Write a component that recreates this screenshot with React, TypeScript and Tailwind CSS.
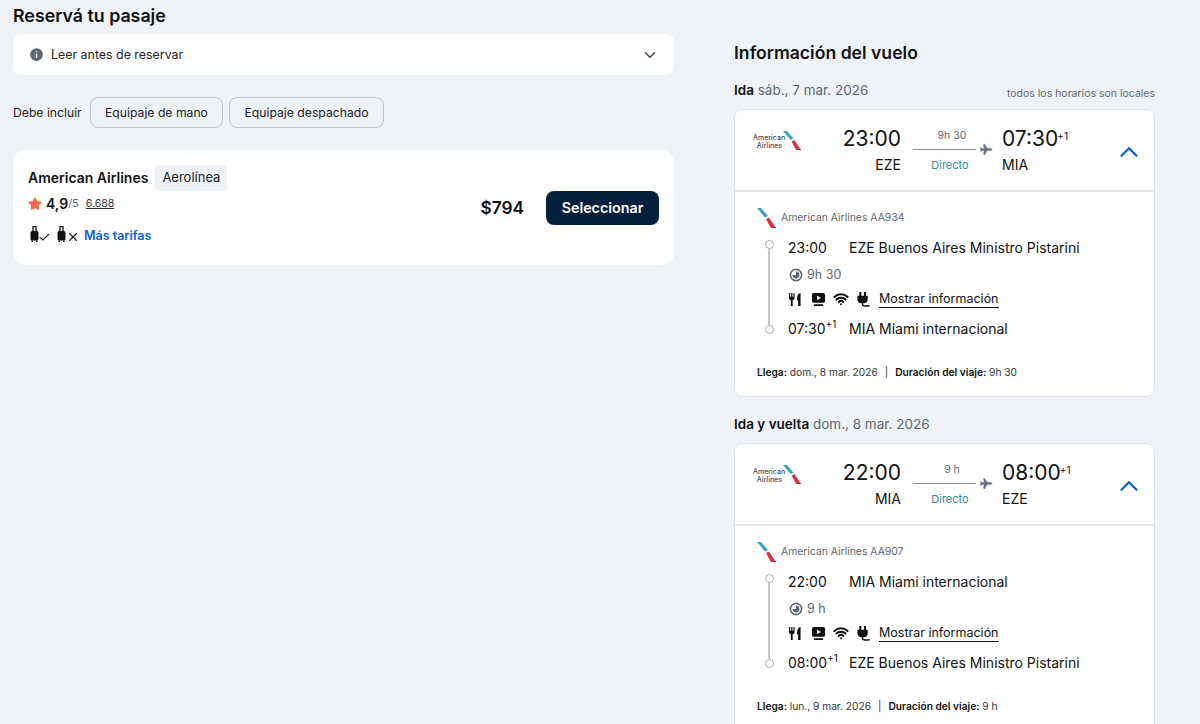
import React from 'react';
import { ChevronDown, ChevronUp, Plane, Info, Star, Check, X, Wifi } from 'lucide-react';

function AALogo({ className }: { className?: string }) {
  return (
    <svg viewBox="0 0 20 20" className={className}>
      <path d="M0 0 L4 0 L11 8 L8 9.5 Z" fill="#3f9fc0" />
      <path d="M9 11 L12 9.5 L18 18.5 L13.5 19.5 Z" fill="#d8343f" />
      <path d="M13.5 19.5 L18 18.5 L19.5 20 L14 20 Z" fill="#9a2a33" />
    </svg>
  );
}

function Luggage({ children }: { children: React.ReactNode }) {
  return (
    <span className="flex items-end mb-[6px]">
      <svg viewBox="0 0 9 16" className="w-[9px] h-[16px]">
        <path d="M3 6 V0.7 H6 V6" fill="none" stroke="#111" strokeWidth="1.3" />
        <rect x="0.5" y="5" width="8" height="9.5" rx="1.6" fill="#111" />
        <rect x="1.5" y="14.5" width="1.5" height="1.5" fill="#111" />
        <rect x="6" y="14.5" width="1.5" height="1.5" fill="#111" />
      </svg>
      {children}
    </span>
  );
}

function MealIcon() {
  return (
    <svg viewBox="0 0 16 16" className="w-[15px] h-[15px]">
      <path d="M1 1 V6 C1 8 2.5 8.5 3 8.5 V15 H5 V8.5 C6 8.5 7 8 7 6 V1 H5.8 V5 H4.7 V1 H3.4 V5 H2.3 V1 Z" fill="#111" />
      <path d="M10.8 15 H13.4 V1 C11 1 9.6 4 9.6 9 H10.8 Z" fill="#111" />
    </svg>
  );
}

function TvIcon() {
  return (
    <svg viewBox="0 0 16 16" className="w-[15px] h-[15px]">
      <rect x="1" y="1" width="14" height="10.5" rx="2" fill="#111" />
      <path d="M6.5 3.8 L10.5 6.3 L6.5 8.8 Z" fill="#fff" />
      <rect x="3" y="13" width="10" height="2" rx="0.6" fill="#111" />
    </svg>
  );
}

function PlugIcon() {
  return (
    <svg viewBox="0 0 16 16" className="w-[15px] h-[15px]">
      <rect x="3.5" y="0" width="2.2" height="4.5" fill="#111" />
      <rect x="8.5" y="0" width="2.2" height="4.5" fill="#111" />
      <path d="M1.5 4 H12.5 V7.5 C12.5 10.5 10.5 12 8.5 12 H5.5 C3.5 12 1.5 10.5 1.5 7.5 Z" fill="#111" />
      <path d="M7 12 V13 C7 15 11 15.6 14.5 14.4" fill="none" stroke="#111" strokeWidth="1.6" />
    </svg>
  );
}

function ClockIcon() {
  return (
    <svg viewBox="0 0 14 14" className="w-[14px] h-[14px]">
      <circle cx="7" cy="7" r="5.6" fill="none" stroke="#5f6672" strokeWidth="1.6" />
      <path d="M7 3.6 A3.4 3.4 0 1 1 3.6 7 L7 7 Z" fill="#5f6672" />
    </svg>
  );
}

type Flight = {
  label: string;
  date: string;
  note?: boolean;
  dep: string;
  arr: string;
  from: string;
  to: string;
  dur: string;
  code: string;
  fromName: string;
  toName: string;
  arrDate: string;
};

function FlightCard({ f }: { f: Flight }) {
  return (
    <section>
      <div className="flex items-end justify-between h-[20px]">
        <p className="text-[13.5px] leading-[20px] text-[#5f6672]">
          <span className="font-semibold text-[#111]">{f.label}</span> {f.date}
        </p>
        {f.note && <span className="text-[10.5px] leading-[12px] text-[#5f6672]">todos los horarios son locales</span>}
      </div>
      <div className="mt-[9px] bg-white rounded-lg border border-[#dfe2e7]">
        <div className="h-[82px] flex pl-[18px] border-b-2 border-[#e3e5e9]">
          <div className="w-[50px] pt-[21px] flex items-start">
            <span className="text-[7px] leading-[8px] text-right text-[#444c59] w-[29px] font-medium pt-[3px]">
              American
              <br />
              Airlines
            </span>
            <AALogo className="w-[19px] h-[19px] ml-[1px]" />
          </div>
          <div className="w-[98px] pt-[14px] text-right">
            <div className="text-[21px] leading-[30px] text-[#111]">{f.dep}</div>
            <div className="text-[14px] leading-[20px] text-[#111] mt-[1px]">{f.from}</div>
          </div>
          <div className="ml-[12px] w-[79px] pt-[19px] flex flex-col">
            <span className="w-[78px] text-center text-[10.5px] leading-[14px] text-[#5f6672]">{f.dur}</span>
            <div className="flex items-center h-[14px] -mt-[1px]">
              <div className="w-[65px] h-px bg-[#8a909a]" />
              <Plane className="w-[13px] h-[13px] ml-[3px] rotate-45 text-[#6b7280] fill-[#6b7280]" strokeWidth={1} />
            </div>
            <span className="w-[74px] text-center text-[11px] leading-[16px] text-[#2a8a93] mt-[1px]">Directo</span>
          </div>
          <div className="ml-[10px] w-[104px] pt-[14px]">
            <div className="text-[21px] leading-[30px] text-[#111]">
              {f.arr}
              <sup className="text-[10px] top-[-6px] -ml-[1px]">+1</sup>
            </div>
            <div className="text-[14px] leading-[20px] text-[#111] mt-[1px]">{f.to}</div>
          </div>
          <div className="ml-[8px] pt-[27px]">
            <ChevronUp className="w-[30px] h-[30px] text-[#0b5ed7]" strokeWidth={1.8} />
          </div>
        </div>
        <div className="pl-[22px] pt-[16px] pb-[16px]">
          <div className="flex items-center h-[20px] text-[10.4px] text-[#5f6672]">
            <AALogo className="w-[20px] h-[20px] mr-[4px]" />
            American Airlines {f.code}
          </div>
          <div className="flex mt-[2px]">
            <div className="w-[28px] flex flex-col items-center pt-[10px] pr-[2px] pb-[5px] -ml-[1px]">
              <span className="w-[9px] h-[9px] rounded-full border border-[#a6abb3]" />
              <span className="flex-1 w-[2px] bg-[#c3c7cd]" />
              <span className="w-[9px] h-[9px] rounded-full border border-[#a6abb3]" />
            </div>
            <div className="flex-1 text-[14px] text-[#111] pl-[4px]">
              <div className="flex h-[31px] pt-[8px] leading-[20px]">
                <span className="w-[61px]">{f.dep}</span>
                <span>
                  {f.from} {f.fromName}
                </span>
              </div>
              <div className="flex items-center gap-[4px] mt-[4px] h-[20px] text-[12.5px] text-[#5f6672] pl-[1px]">
                <ClockIcon />
                {f.dur}
              </div>
              <div className="flex items-center mt-[4px] h-[20px]">
                <MealIcon />
                <span className="ml-[8px]">
                  <TvIcon />
                </span>
                <Wifi className="ml-[7px] w-[16px] h-[16px] text-[#111]" strokeWidth={3} />
                <span className="ml-[7px]">
                  <PlugIcon />
                </span>
                <span className="ml-[8px] text-[12.5px] leading-[16px] border-b border-[#111]">Mostrar información</span>
              </div>
              <div className="flex h-[20px] mt-[10px] leading-[20px]">
                <span className="w-[61px]">
                  {f.arr}
                  <sup className="text-[10px] top-[-6px]">+1</sup>
                </span>
                <span>
                  {f.to} {f.toName}
                </span>
              </div>
            </div>
          </div>
          <p className="mt-[25px] text-[10.2px] leading-[16px] text-[#333]">
            <span className="font-semibold text-[#111]">Llega:</span> {f.arrDate}
            <span className="mx-[7px]">|</span>
            <span className="font-semibold text-[#111]">Duración del viaje:</span> {f.dur}
          </p>
        </div>
      </div>
    </section>
  );
}

const flights: Flight[] = [
  {
    label: 'Ida',
    date: 'sáb., 7 mar. 2026',
    note: true,
    dep: '23:00',
    arr: '07:30',
    from: 'EZE',
    to: 'MIA',
    dur: '9h 30',
    code: 'AA934',
    fromName: 'Buenos Aires Ministro Pistarini',
    toName: 'Miami internacional',
    arrDate: 'dom., 8 mar. 2026',
  },
  {
    label: 'Ida y vuelta',
    date: 'dom., 8 mar. 2026',
    dep: '22:00',
    arr: '08:00',
    from: 'MIA',
    to: 'EZE',
    dur: '9 h',
    code: 'AA907',
    fromName: 'Miami internacional',
    toName: 'Buenos Aires Ministro Pistarini',
    arrDate: 'lun., 9 mar. 2026',
  },
];

export default function App() {
  return (
    <div className="h-[724px] overflow-hidden bg-[#eff3f8] font-['Inter',sans-serif] flex pl-[13px]">
      <main className="w-[661px] pt-[6px]">
        <h1 className="text-[17.8px] leading-[20px] font-semibold text-[#111]">Reservá tu pasaje</h1>
        <div className="mt-[8px] h-[41px] bg-white rounded-lg flex items-center pl-[15px] pr-[16px] text-[12.4px] text-[#222]">
          <Info className="w-[17px] h-[17px] text-white fill-[#5f6672]" strokeWidth={2} />
          <span className="ml-[6px] flex-1 pt-[1px]">Leer antes de reservar</span>
          <ChevronDown className="w-[18px] h-[18px] mr-[-1px] text-[#444]" />
        </div>
        <div className="mt-[22px] flex items-center text-[12.2px] text-[#222]">
          <span className="w-[77px] pt-[2px]">Debe incluir</span>
          <button className="h-[31px] w-[133px] pt-[2px] rounded-lg border border-[#c3c7cd]">Equipaje de mano</button>
          <button className="ml-[6px] h-[31px] w-[155px] pt-[2px] rounded-lg border border-[#c3c7cd]">Equipaje despachado</button>
        </div>
        <div className="mt-[22px] h-[115px] bg-white rounded-xl flex items-center justify-between pl-[15px] pr-[15px]">
          <div className="mb-[4px]">
            <div className="flex items-center gap-[7px]">
              <span className="text-[14px] font-semibold text-[#111]">American Airlines</span>
              <span className="h-[26px] flex items-center px-[7px] rounded bg-[#eff3f8] text-[13px] text-[#222]">Aerolínea</span>
            </div>
            <div className="flex items-center mt-[3px] h-[20px]">
              <Star className="w-[14px] h-[14px] text-[#f5694a] fill-[#f5694a]" />
              <span className="ml-[4px] text-[14px] font-semibold text-[#111]">4,9</span>
              <span className="text-[11px] text-[#5f6672]">/5</span>
              <span className="ml-[7px] text-[10.5px] text-[#333] underline">6.688</span>
            </div>
            <div className="flex items-center mt-[13px] h-[20px] pl-[2px]">
              <Luggage>
                <Check className="w-[13px] h-[13px] -mx-[1px] -mb-[2px] text-[#222]" />
              </Luggage>
              <span className="ml-[7px]">
                <Luggage>
                  <X className="w-[14px] h-[14px] -mb-[2px] -mr-[2px] text-[#222]" />
                </Luggage>
              </span>
              <span className="ml-[6px] text-[12.5px] font-semibold text-[#0b62d6]">Más tarifas</span>
            </div>
          </div>
          <div className="flex items-center">
            <span className="text-[17.3px] font-semibold text-[#111]">$794</span>
            <button className="ml-[22px] w-[113px] h-[34px] rounded-lg bg-[#05203c] text-white text-[14.3px] font-semibold">
              Seleccionar
            </button>
          </div>
        </div>
      </main>
      <aside className="ml-[60px] w-[421px] pt-[43px]">
        <h2 className="text-[17.6px] leading-[20px] font-semibold text-[#111]">Información del vuelo</h2>
        <div className="mt-[17px] flex flex-col gap-[17px]">
          {flights.map((f) => (
            <FlightCard key={f.code} f={f} />
          ))}
        </div>
      </aside>
    </div>
  );
}
